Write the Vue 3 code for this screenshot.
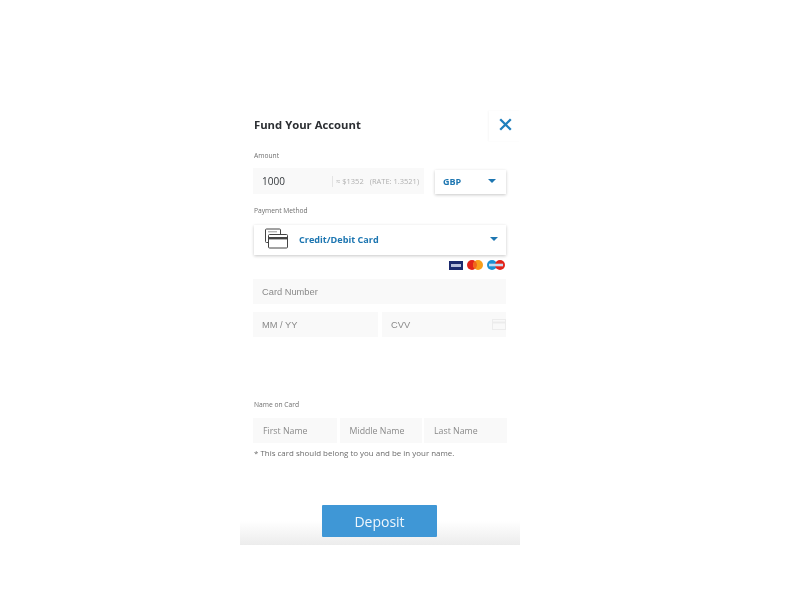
<template>
  <main class="page">
    <section class="panel">
      <header class="head">
        <h1>Fund Your Account</h1>
        <button class="close" aria-label="Close">
          <svg width="13" height="13" viewBox="0 0 13 13"><path d="M1.2 1.2 11.8 11.8M11.8 1.2 1.2 11.8" stroke="#1f7fbd" stroke-width="2.3" fill="none"/></svg>
        </button>
      </header>

      <label class="lab amount-lab">Amount</label>
      <div class="amount-row">
        <div class="field amount">
          <span class="value">1000</span>
          <span class="rate"><i>≈ $1352</i><i>(RATE: 1.3521)</i></span>
        </div>
        <div class="select gbp"><b>GBP</b><span class="caret"></span></div>
      </div>

      <label class="lab pay-lab">Payment Method</label>
      <div class="select method">
        <svg class="card-ico" width="23" height="21" viewBox="0 0 23 21" fill="none" stroke="#444" stroke-width="1">
          <path d="M3 14.5H1.5a1 1 0 0 1-1-1V2a1 1 0 0 1 1-1h13a1 1 0 0 1 1 1v4"/>
          <path d="M3 3.8h9" stroke="#999"/>
          <rect x="3.5" y="6.5" width="19" height="13.5" rx="1" fill="#fff"/>
          <rect x="3.5" y="9" width="19" height="2.4" fill="#444" stroke="none"/>
        </svg>
        <b>Credit/Debit Card</b>
        <span class="caret"></span>
      </div>

      <div class="brands">
        <svg width="14" height="9" viewBox="0 0 14 9"><rect width="14" height="9" fill="#1c2a6e"/><rect x="2" y="3" width="10" height="3" fill="#b9c0dc"/></svg>
        <svg width="16" height="10" viewBox="0 0 16 10"><circle cx="5" cy="5" r="5" fill="#e2231a"/><circle cx="11" cy="5" r="5" fill="#f79e1b"/><path d="M8 1a5 5 0 0 1 0 8 5 5 0 0 1 0-8z" fill="#f0641e"/></svg>
        <svg width="18" height="10" viewBox="0 0 18 10"><circle cx="5" cy="5" r="5" fill="#1a8fd1"/><circle cx="13" cy="5" r="5" fill="#e2231a"/><rect x="2" y="3.7" width="14" height="2.6" fill="#c8dcf0"/></svg>
      </div>

      <div class="field ph card-num">Card Number</div>
      <div class="two">
        <div class="field ph">MM / YY</div>
        <div class="field ph cvv">CVV
          <svg width="14" height="11" viewBox="0 0 14 11" fill="none" stroke="#ececec"><rect x=".5" y=".5" width="13" height="10"/><path d="M.5 3.5h13" stroke-width="2"/></svg>
        </div>
      </div>

      <label class="lab name-lab">Name on Card</label>
      <div class="three">
        <div class="field ph">First Name</div>
        <div class="field ph">Middle Name</div>
        <div class="field ph">Last Name</div>
      </div>
      <p class="note">* This card should belong to you and be in your name.</p>

      <footer class="foot">
        <button class="deposit">Deposit</button>
      </footer>
    </section>
  </main>
</template>

<script setup>
</script>

<style>
html, body { margin: 0; background: #fff; }
</style>

<style scoped>
.page {
  width: 800px;
  height: 600px;
  padding: 111px 0 0 240px;
  box-sizing: border-box;
  background: #fff;
  font-family: "Open Sans", sans-serif;
  overflow: hidden;
}
.panel {
  width: 280px;
  height: 434px;
  display: flex;
  flex-direction: column;
  filter: blur(0.5px);
}
.head {
  height: 30px;
  display: flex;
  align-items: center;
  justify-content: space-between;
  padding-left: 14px;
  flex: none;
}
h1 {
  margin: -4px 0 0;
  font-size: 11.3px;
  line-height: 27px;
  font-weight: 700;
  color: #2c2f33;
}
.close {
  width: 31px;
  height: 30px;
  margin: 0;
  padding: 0 8px 4px 0;
  border: 0;
  background: #fff;
  box-shadow: -1px 0 2px rgba(0, 0, 0, 0.035);
  display: flex;
  align-items: center;
  justify-content: flex-end;
}
.lab {
  display: block;
  margin-left: 14px;
  font-size: 6.7px;
  line-height: 10px;
  color: #6f6f6f;
}
.amount-lab { margin-top: 10px; }
.amount-row {
  display: flex;
  justify-content: space-between;
  align-items: flex-end;
  margin: 7px 14px 0 13px;
}
.field {
  background: #f9f9f9;
  display: flex;
  align-items: center;
  box-sizing: border-box;
}
.amount {
  width: 171px;
  height: 26px;
  padding-left: 9px;
}
.value {
  width: 70px;
  font-size: 10px;
  color: #33373b;
}
.rate {
  display: flex;
  gap: 6px;
  border-left: 1px solid #e4e4e4;
  padding-left: 3px;
  font-size: 7.5px;
  line-height: 11px;
  color: #b0b0b0;
  white-space: nowrap;
}
.rate i { font-style: normal; }
.select {
  background: #fff;
  box-shadow: 0 1px 3px rgba(0, 0, 0, 0.22);
  display: flex;
  align-items: center;
  box-sizing: border-box;
  color: #1d76b1;
}
.select b { font-size: 9px; font-weight: 700; }
.gbp {
  width: 71px;
  height: 24px;
  padding: 0 10px 2px 8px;
  justify-content: space-between;
}
.caret {
  width: 0;
  height: 0;
  border-left: 4px solid transparent;
  border-right: 4px solid transparent;
  border-top: 4px solid #1d76b1;
}
.pay-lab { margin-top: 12px; }
.method {
  height: 30px;
  margin: 9px 14px 0;
  padding: 0 8px 2px 11px;
}
.method .card-ico { margin-top: -1px; flex: none; }
.method b { margin-left: 11px; flex: 1; font-size: 9.1px; }
.brands {
  display: flex;
  justify-content: flex-end;
  align-items: center;
  gap: 4px;
  height: 10px;
  margin: 5px 15px 0 0;
}
.ph {
  height: 25px;
  padding-left: 9px;
  font-size: 9.3px;
  color: #8a8a8a;
  font-family: "Liberation Sans", sans-serif;
}
.card-num { margin: 9px 14px 0 13px; }
.two {
  display: grid;
  grid-template-columns: 125px 124px;
  justify-content: space-between;
  margin: 8px 14px 0 13px;
}
.cvv { justify-content: space-between; }
.name-lab { margin-top: 63px; }
.three {
  display: grid;
  grid-template-columns: 84px 82px 83px;
  justify-content: space-between;
  margin: 8px 13px 0;
}
.three .ph { font-family: "Open Sans", sans-serif; font-size: 8.8px; padding-left: 10px; }
.note {
  margin: 5px 0 0 14px;
  font-size: 7.95px;
  line-height: 11px;
  color: #6c6c6c;
  white-space: nowrap;
}
.foot {
  margin-top: auto;
  height: 40px;
  display: flex;
  justify-content: center;
  align-items: flex-start;
  background: linear-gradient(to bottom, #fff 0%, #fff 40%, #ececec 100%);
}
.deposit {
  width: 115px;
  height: 32px;
  margin: 0 0 0 -1px;
  border: 0;
  border-radius: 1px;
  background: #3f97d6;
  color: #eef6fc;
  font-family: "Open Sans", sans-serif;
  font-size: 14px;
  padding: 0;
}
</style>
